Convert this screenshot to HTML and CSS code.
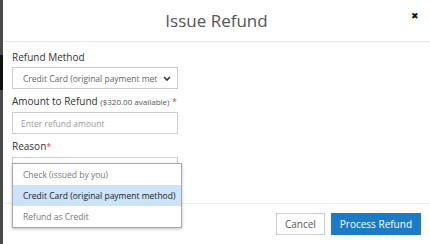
FILE: index.html
```html
<!DOCTYPE html>
<html lang="en">
<head>
  <meta charset="UTF-8">
  <title>Issue Refund</title>
  <link rel="stylesheet" href="styles.css">
</head>
<body>
  <div class="backdrop"></div>
  <div class="modal">
    <div class="modal-header">
      <h2>Issue Refund</h2>
      <span class="close">&#10006;</span>
    </div>

    <div class="modal-body">
      <div class="field">
        <label for="method">Refund Method</label>
        <div class="select">
          <span>Credit Card (original payment met</span>
          <svg width="8" height="5" viewBox="0 0 8 5"><path d="M1 1l3 3 3-3" fill="none" stroke="#333" stroke-width="1.6"/></svg>
        </div>
      </div>

      <div class="field">
        <label for="amount">Amount to Refund <small>($320.00 available)</small> <em>*</em></label>
        <input type="text" id="amount" placeholder="Enter refund amount">
      </div>

      <div class="field">
        <label for="reason">Reason<em>*</em></label>
        <div class="select"></div>
      </div>

      <!-- open dropdown of the refund method select -->
      <ul class="dropdown">
        <li>Check (issued by you)</li>
        <li class="active">Credit Card (original payment method)</li>
        <li>Refund as Credit</li>
      </ul>
    </div>

    <div class="modal-footer">
      <button class="btn">Cancel</button>
      <button class="btn primary">Process Refund</button>
    </div>
  </div>
</body>
</html>
```

FILE: styles.css
```css
body {
  margin: 0;
  display: flex;
  height: 244px;
  overflow: hidden;
  font-family: 'Open Sans', sans-serif;
  background: #fff;
}
.backdrop {
  width: 3px;
  background: linear-gradient(#4a4a4a 0, #4a4a4a 55px, #111 55px, #111 90px, #4a4a4a 90px);
}
.modal {
  flex: 1;
  display: flex;
  flex-direction: column;
  background: #fff;
}
.modal-header {
  position: relative;
  height: 41px;
  border-bottom: 1px solid #e8e8e8;
  display: flex;
  align-items: center;
  justify-content: center;
}
.modal-header h2 {
  margin: 0 0 1px 0;
  font-size: 17px;
  font-weight: normal;
  color: #555;
}
.close {
  position: absolute;
  right: 11px;
  top: 9px;
  font-size: 9px;
  color: #111;
}
.modal-body {
  position: relative;
  height: 161px;
  padding: 8px 9px 0;
  box-sizing: border-box;
}
.field {
  display: flex;
  flex-direction: column;
  gap: 3px;
  margin-bottom: 5px;
  width: 166px;
}
label {
  font-size: 10px;
  line-height: 14px;
  color: #333;
  white-space: nowrap;
}
label small {
  font-size: 8px;
  color: #555;
}
label em {
  font-style: normal;
  color: #e0413c;
  font-size: 9px;
}
.select, input {
  height: 22px;
  box-sizing: border-box;
  border: 1px solid #ccc;
  background: #fff;
  font-family: inherit;
  font-size: 8.5px;
  color: #666;
  padding: 0 10px;
  margin: 0;
  width: 166px;
}
input {
  padding-left: 8px;
}
.select {
  display: flex;
  align-items: center;
  justify-content: space-between;
  padding-right: 6px;
  white-space: nowrap;
  overflow: hidden;
}
.select span {
  overflow: hidden;
}
input::placeholder {
  color: #999;
}
.dropdown {
  position: absolute;
  left: 9px;
  top: 121px;
  width: 168px;
  margin: 0;
  padding: 0;
  list-style: none;
  background: #fff;
  border: 1px solid #a9a9a9;
  box-shadow: 0 1px 3px rgba(0, 0, 0, 0.25);
  z-index: 2;
}
.dropdown li {
  height: 21px;
  line-height: 21px;
  padding-left: 10px;
  font-size: 8.5px;
  color: #777;
  white-space: nowrap;
}
.dropdown li.active {
  background: #cde3f7;
  color: #222;
}
.modal-footer {
  flex: 1;
  border-top: 1px solid #eee;
  display: flex;
  justify-content: flex-end;
  align-items: flex-start;
  gap: 6px;
  padding: 9px 9px 0 0;
}
.btn {
  height: 22px;
  padding: 0 8px;
  border: 1px solid #ccc;
  background: #fff;
  color: #555;
  font-family: inherit;
  font-size: 10px;
}
.btn.primary {
  background: #1b7bc6;
  border-color: #1b7bc6;
  color: #fff;
  padding: 0 8px;
}
```
